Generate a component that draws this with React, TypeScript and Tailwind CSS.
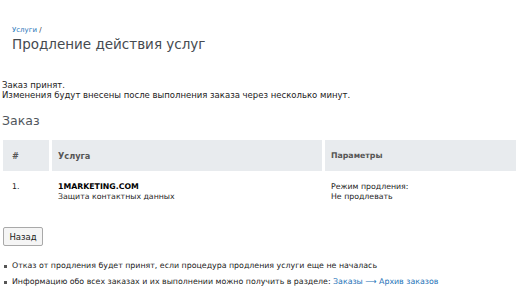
import { type FC } from 'react'

const App: FC = () => {
  return (
    <div className="w-[516px] h-[290px] overflow-hidden bg-white text-[8px] leading-[10px] text-[#222] font-['DejaVu_Sans',sans-serif]">
      {/* Header */}
      <div className="pl-3 pt-[25px]">
        <div className="text-[7px] leading-[10px] text-[#333]">
          <a className="text-[#1d72b8]">Услуги</a> /
        </div>
        <h1 className="text-[13.5px] leading-[18px] text-[#454a50]">Продление действия услуг</h1>
      </div>

      {/* Status */}
      <div className="pl-[2px] mt-[27px] text-[8.5px]">
        <p>Заказ принят.</p>
        <p>Изменения будут внесены после выполнения заказа через несколько минут.</p>
      </div>

      <h2 className="pl-[2px] mt-[13px] text-[12.5px] leading-[16px] text-[#50565c]">Заказ</h2>

      {/* Order table */}
      <div className="pl-[3px] mt-[11px] grid grid-cols-[46px_270px_1fr] gap-x-[3px] text-[7.8px]">
        <div className="bg-[#e8ebee] h-[31px] flex items-center pl-[9px] font-bold text-[#555] text-[8.2px]">#</div>
        <div className="bg-[#e8ebee] h-[31px] flex items-center pl-[6px] font-bold text-[#555] text-[8.2px]">Услуга</div>
        <div className="bg-[#e8ebee] h-[31px] flex items-center pl-[6px] font-bold text-[#555] text-[7.8px]">Параметры</div>

        <div className="pt-[11px] pl-[9px]">1.</div>
        <div className="pt-[11px] pl-[6px]">
          <div className="font-bold text-black">1MARKETING.COM</div>
          <div>Защита контактных данных</div>
        </div>
        <div className="pt-[11px] pl-[6px]">
          <div>Режим продления:</div>
          <div>Не продлевать</div>
        </div>
      </div>

      <div className="pl-[3px] mt-[25px]">
        <button className="h-[19px] w-[40px] border border-[#a9a9a9] rounded-[2px] bg-[#f5f5f5] text-[8.5px] leading-[10px] text-[#222]">
          Назад
        </button>
      </div>

      <ul className="mt-[15px] pl-[4px] space-y-[6px] text-[7.85px]">
        <li className="flex items-center gap-[5px]">
          <span className="w-[3px] h-[3px] bg-[#555]" />
          Отказ от продления будет принят, если процедура продления услуги еще не началась
        </li>
        <li className="flex items-center gap-[5px]">
          <span className="w-[3px] h-[3px] bg-[#555]" />
          <span>
            Информацию обо всех заказах и их выполнении можно получить в разделе:{' '}
            <a className="text-[#1d72b8]">Заказы ⟶ Архив заказов</a>
          </span>
        </li>
      </ul>
    </div>
  )
}

export default App
